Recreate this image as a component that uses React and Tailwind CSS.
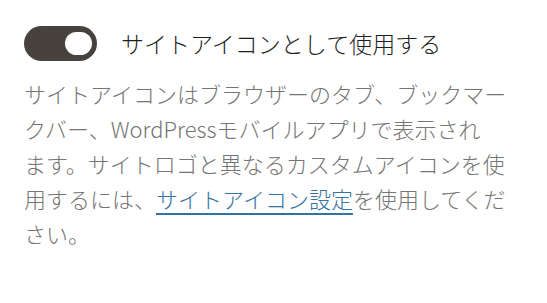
import React, { useState } from 'react';

const font = { fontFamily: '"Noto Sans CJK JP", "Noto Sans", sans-serif' };

const App = () => {
  const [enabled, setEnabled] = useState(true);

  return (
    <div className="w-[547px] h-[303px] bg-white px-6 pt-[26px]" style={font}>
      <label className="flex items-center gap-6 cursor-pointer">
        <button
          type="button"
          onClick={() => setEnabled(!enabled)}
          className={`w-[73px] h-[35px] rounded-full flex items-center px-[5px] ${enabled ? 'bg-[#47423e] justify-end' : 'bg-gray-300 justify-start'}`}
        >
          <span className="block w-[27px] h-[23px] rounded-full bg-white" />
        </button>
        <span className="text-[23px] font-light text-[#1e1e1e] leading-none">サイトアイコンとして使用する</span>
      </label>

      <p className="mt-[15px] w-[500px] text-[22px] font-light leading-[35px] text-[#757575] whitespace-nowrap">
        サイトアイコンはブラウザーのタブ、ブックマー
        <br />
        クバー、WordPressモバイルアプリで表示され
        <br />
        ます。サイトロゴと異なるカスタムアイコンを使
        <br />
        用するには、
        <a href="#" className="text-[#34729f] underline underline-offset-[5px] decoration-2">サイトアイコン設定</a>
        を使用してくだ
        <br />
        さい。
      </p>
    </div>
  );
};

export default App;
